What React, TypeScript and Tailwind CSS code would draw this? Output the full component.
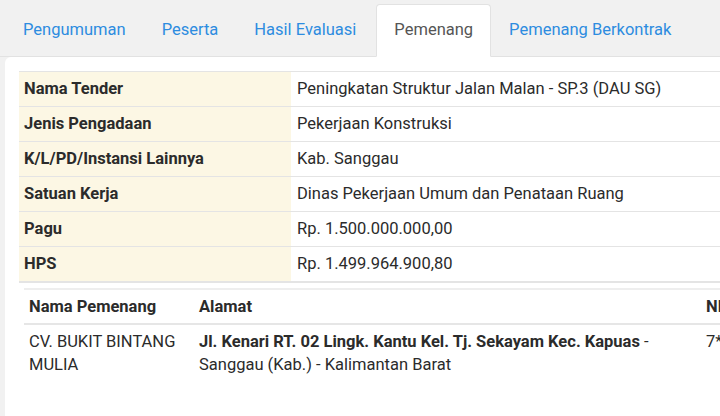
import React from "react";

const rows: [string, string][] = [
  ["Nama Tender", "Peningkatan Struktur Jalan Malan - SP.3 (DAU SG)"],
  ["Jenis Pengadaan", "Pekerjaan Konstruksi"],
  ["K/L/PD/Instansi Lainnya", "Kab. Sanggau"],
  ["Satuan Kerja", "Dinas Pekerjaan Umum dan Penataan Ruang"],
  ["Pagu", "Rp. 1.500.000.000,00"],
  ["HPS", "Rp. 1.499.964.900,80"],
];

const tabs = ["Pengumuman", "Peserta", "Hasil Evaluasi", "Pemenang", "Pemenang Berkontrak"];

export default function App() {
  return (
    <div className="w-[720px] h-[416px] overflow-hidden bg-[#f1f1f1] font-['Roboto','Liberation_Sans',sans-serif] text-[16.5px] text-[#2b2b2b]">
      <div className="flex pl-[5px] pt-[4px] border-b border-[#e2e2e2] w-[900px]">
        {tabs.map((t) => {
          const active = t === "Pemenang";
          return active ? (
            <div
              key={t}
              className="px-[17px] h-[53px] -mb-px flex items-center bg-white border border-[#e2e2e2] border-b-white rounded-t-[4px] text-[#555] ml-[2px]"
            >
              {t}
            </div>
          ) : (
            <div key={t} className="px-[18px] h-[53px] -mb-px flex items-center text-[#2d8ce0]">
              {t}
            </div>
          );
        })}
      </div>
      <div className="ml-[5px] w-[900px] h-[400px] bg-white rounded-tl-[6px] pl-[14px] pt-[14px]">
        <table className="w-[820px] border-collapse">
          <tbody>
            {rows.map(([k, v], i) => (
              <tr key={k} className={`h-[35px] border-t border-[#e4e4e4] ${i === rows.length - 1 ? "border-b-2" : ""}`}>
                <td className="w-[272px] bg-[#fcf7e4] pl-[5px] font-bold leading-[22px]">{k}</td>
                <td className="pl-[6px] leading-[22px]">{v}</td>
              </tr>
            ))}
          </tbody>
        </table>
        <table className="ml-[5px] mt-[5px] w-[820px] border-collapse border-t-2 border-[#eeeeee]">
          <thead>
            <tr className="h-[35px] border-b-2 border-[#e6e6e6] text-left">
              <th className="w-[170px] pl-[5px] pt-[2px] font-bold">Nama Pemenang</th>
              <th className="w-[507px] pl-[5px] pt-[2px] font-bold">Alamat</th>
              <th className="pl-[5px] pt-[2px] font-bold">NPWP</th>
            </tr>
          </thead>
          <tbody>
            <tr className="align-top leading-[23px]">
              <td className="pl-[5px] pt-[5px] pr-[8px]">CV. BUKIT BINTANG MULIA</td>
              <td className="pl-[5px] pt-[5px] pr-[40px]">
                <span className="font-bold">Jl. Kenari RT. 02 Lingk. Kantu Kel. Tj. Sekayam Kec. Kapuas</span> - Sanggau (Kab.) - Kalimantan Barat
              </td>
              <td className="pl-[5px] pt-[5px]">7*.***.***.*-***.***</td>
            </tr>
          </tbody>
        </table>
      </div>
    </div>
  );
}
